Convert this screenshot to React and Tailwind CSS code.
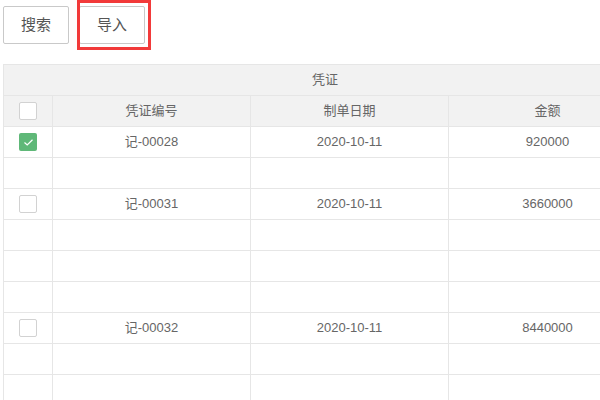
import React from "react";

const ROWS = [
  { checked: true, code: "记-00028", date: "2020-10-11", amount: "920000" },
  null,
  { checked: false, code: "记-00031", date: "2020-10-11", amount: "3660000" },
  null,
  null,
  null,
  { checked: false, code: "记-00032", date: "2020-10-11", amount: "8440000" },
  null,
  null,
];

function Checkbox({ checked }) {
  if (checked) {
    return (
      <span className="mx-auto flex h-[18px] w-[18px] items-center justify-center rounded-[2px] bg-[#5FB878]">
        <svg width="11" height="9" viewBox="0 0 11 9" fill="none">
          <path d="M1.5 4.5 L4.2 7 L9.5 1.8" stroke="#fff" strokeWidth="1.2" />
        </svg>
      </span>
    );
  }
  return (
    <span className="mx-auto block h-[18px] w-[18px] rounded-[2px] border border-[#d2d2d2] bg-white" />
  );
}

export default function App() {
  const cell = "h-[31px] border border-[#e6e6e6] p-0 text-center align-middle";
  return (
    <div
      className="relative h-[400px] w-[600px] overflow-hidden bg-white pl-[3px] pt-[6px] text-[14px] text-[#666]"
      style={{ fontFamily: '"Liberation Sans", "Noto Sans CJK SC", sans-serif' }}
    >
      {/* TOOLBAR */}
      <div className="flex gap-[10px]">
        <button className="h-[38px] w-[66px] rounded-[2px] border border-[#c9c9c9] bg-white text-[15px] text-[#555]">
          搜索
        </button>
        <button className="h-[38px] w-[66px] rounded-[2px] border border-[#c9c9c9] bg-white text-[15px] text-[#555]">
          导入
        </button>
      </div>
      {/* highlight box */}
      <div className="absolute left-[77px] top-0 h-[50px] w-[74px] border-[3px] border-[#f23a3a]" />

      {/* TABLE */}
      <table className="mt-[20px] w-[643px] table-fixed border-collapse text-[13px]">
        <colgroup>
          <col className="w-[49px]" />
          <col className="w-[198px]" />
          <col className="w-[198px]" />
          <col className="w-[198px]" />
        </colgroup>
        <thead className="bg-[#f2f2f2]">
          <tr>
            <th colSpan={4} className={cell + " font-normal"}>
              凭证
            </th>
          </tr>
          <tr>
            <th className={cell + " font-normal"}>
              <Checkbox checked={false} />
            </th>
            <th className={cell + " font-normal"}>凭证编号</th>
            <th className={cell + " font-normal"}>制单日期</th>
            <th className={cell + " font-normal"}>金额</th>
          </tr>
        </thead>
        <tbody>
          {ROWS.map((r, i) => (
            <tr key={i}>
              <td className={cell}>{r && <Checkbox checked={r.checked} />}</td>
              <td className={cell}>{r && r.code}</td>
              <td className={cell}>{r && r.date}</td>
              <td className={cell}>{r && r.amount}</td>
            </tr>
          ))}
        </tbody>
      </table>
    </div>
  );
}
